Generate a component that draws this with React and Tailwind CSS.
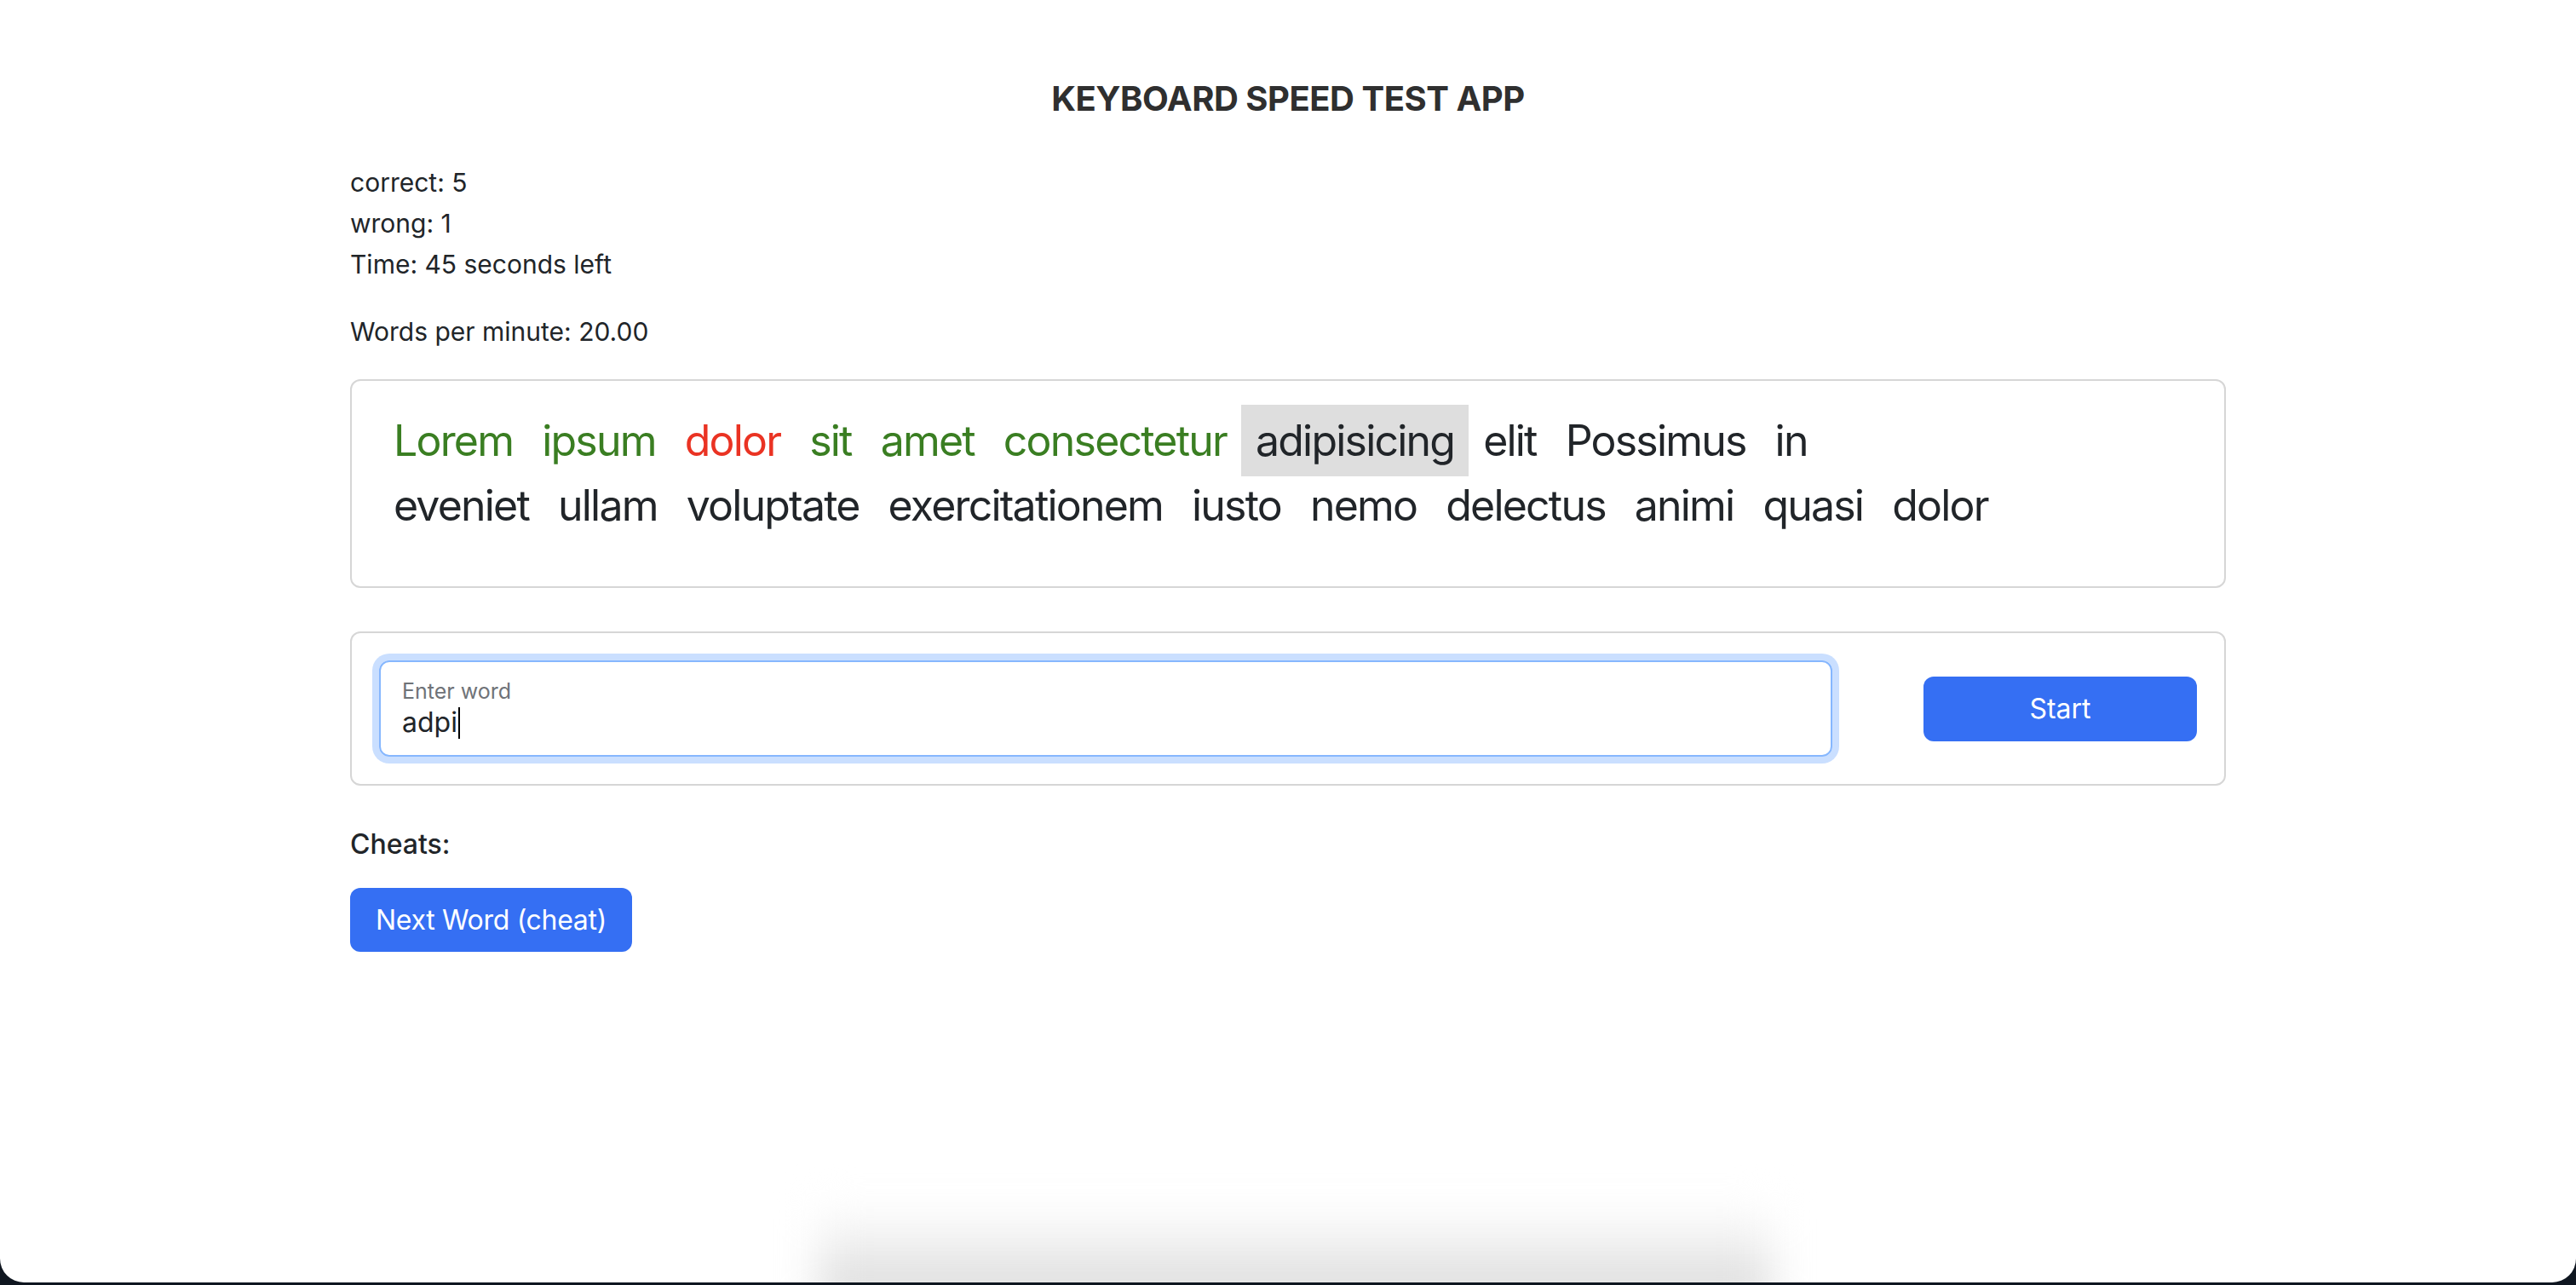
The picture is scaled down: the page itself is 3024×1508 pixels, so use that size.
const LINES = [
  [
    { w: 'Lorem', s: 'ok' },
    { w: 'ipsum', s: 'ok' },
    { w: 'dolor', s: 'bad' },
    { w: 'sit', s: 'ok' },
    { w: 'amet', s: 'ok' },
    { w: 'consectetur', s: 'ok' },
    { w: 'adipisicing', s: 'current' },
    { w: 'elit' },
    { w: 'Possimus' },
    { w: 'in' },
  ],
  [
    { w: 'eveniet' },
    { w: 'ullam' },
    { w: 'voluptate' },
    { w: 'exercitationem' },
    { w: 'iusto' },
    { w: 'nemo' },
    { w: 'delectus' },
    { w: 'animi' },
    { w: 'quasi' },
    { w: 'dolor' },
  ],
];

function Word({ w, s }) {
  const color =
    s === 'ok' ? 'text-[#3a7e22]' : s === 'bad' ? 'text-[#ea3323]' : 'text-[#212529]';
  return (
    <span
      className={`${color} ${s === 'current' ? 'bg-[#dedede]' : ''} -my-[4px] px-[17px] py-[10.5px] leading-[63px]`}
    >
      {w}
    </span>
  );
}

export default function App() {
  return (
    <div className="h-[1508px] bg-[#0f1620] font-[Inter,sans-serif] text-[#212529]">
      <div className="relative h-[1505px] overflow-hidden rounded-b-[28px] bg-white">
        <div className="mx-auto w-[2202px] pt-[92px]">
          <h1 className="text-center text-[40px] font-bold leading-[48px] tracking-[-0.012em] text-[#2f2f2f]">
            KEYBOARD SPEED TEST APP
          </h1>

          <div className="mt-[50px] text-[30px] leading-[48px]">
            <div>correct: 5</div>
            <div>wrong: 1</div>
            <div>Time: 45 seconds left</div>
          </div>
          <div className="mt-[31px] text-[30px] leading-[48px]">Words per minute: 20.00</div>

          <div className="mt-[32px] rounded-[12px] border-2 border-[#d6d6d6] px-[32px] pt-[32px] pb-[57px] text-[50px] tracking-[-0.036em]">
            {LINES.map((line, i) => (
              <div key={i} className="flex">
                {line.map((word, j) => (
                  <Word key={j} {...word} />
                ))}
              </div>
            ))}
          </div>

          <div className="mt-[51px] flex items-center rounded-[12px] border-2 border-[#d6d6d6] p-[32px]">
            <div className="h-[113px] flex-1 rounded-[12px] border-2 border-[#86b7fe] px-[25px] pt-[19px] shadow-[0_0_0_8px_rgba(13,110,253,0.22)]">
              <div className="text-[25px] leading-[30px] text-[#6f7378]">Enter word</div>
              <div className="mt-[2px] flex items-center text-[32px] leading-[40px] text-[#212529]">
                <span>adpi</span>
                <span className="ml-[1px] h-[37px] w-[2px] bg-black" />
              </div>
            </div>
            <button className="ml-[107px] h-[76px] w-[321px] rounded-[12px] bg-[#356ff3] text-[32px] text-white">
              Start
            </button>
          </div>

          <div className="mt-[45px] text-[32px] font-medium leading-[48px]">Cheats:</div>
          <button className="mt-[27px] h-[75px] w-[331px] rounded-[12px] bg-[#356ff3] text-[32px] tracking-[-0.01em] text-white">
            Next Word (cheat)
          </button>
        </div>

        <div className="absolute bottom-[-30px] left-[960px] h-[120px] w-[1120px] bg-linear-to-b from-white to-[#d6d6d6] blur-[24px]" />
      </div>
    </div>
  );
}
